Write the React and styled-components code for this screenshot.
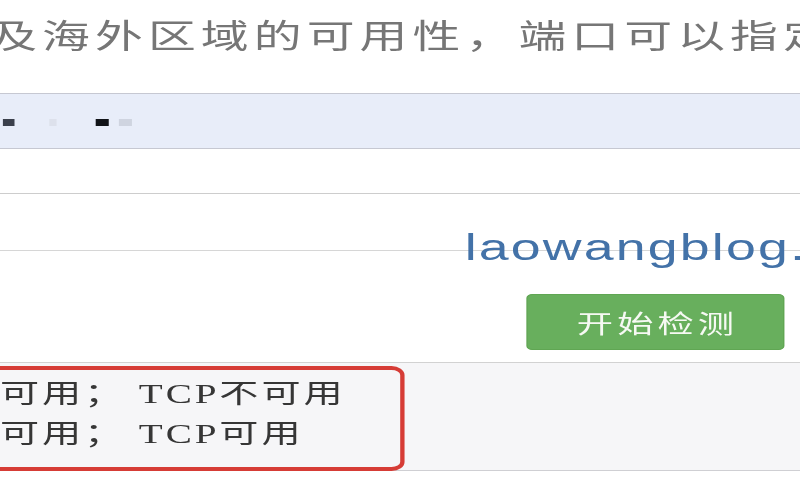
import React from 'react';
import styled, { createGlobalStyle } from 'styled-components';

// the screenshot is stretched sideways, so the page is laid out narrow and scaled
const STRETCH = 1.45;

const GlobalStyle = createGlobalStyle`
  html, body {
    margin: 0;
    padding: 0;
    background: #ffffff;
    overflow: hidden;
  }
`;

const Viewport = styled.div`
  width: 800px;
  height: 500px;
  overflow: hidden;
  background: #ffffff;
`;

const Stage = styled.div`
  width: ${800 / STRETCH}px;
  transform: scaleX(${STRETCH});
  transform-origin: 0 0;
`;

const Intro = styled.div`
  box-sizing: border-box;
  height: 93px;
  padding-top: 18px;
  white-space: nowrap;
  font-family: "Noto Sans CJK SC", "Liberation Serif", serif;
  font-size: 33px;
  line-height: 33px;
  letter-spacing: 3.5px;
  color: #767676;
  margin-left: -7.5px;
`;

const Field = styled.div`
  box-sizing: border-box;
  height: 56px;
  display: flex;
  align-items: center;
  padding-left: 2px;
  padding-top: 2px;
  background: #e8edf9;
  border-top: 1px solid #c6c8d2;
  border-bottom: 1px solid #c6c8d2;
`;

const Blot = styled.span`
  display: inline-block;
  height: 7px;
  width: ${(p) => p.$w}px;
  margin-left: ${(p) => p.$gap}px;
  background: ${(p) => p.$color};
`;

const BlankRow = styled.div`
  box-sizing: border-box;
  height: ${(p) => p.$h}px;
  border-bottom: 1px solid ${(p) => p.$line};
`;

const Panel = styled.div`
  position: relative;
`;

const Watermark = styled.div`
  position: absolute;
  top: -22px;
  left: 320.5px;
  white-space: nowrap;
  font-family: "Liberation Sans", Arial, sans-serif;
  font-size: 37px;
  line-height: 37px;
  letter-spacing: 1.5px;
  color: #4372a8;
  pointer-events: none;
`;

const ActionRow = styled.div`
  box-sizing: border-box;
  height: 112px;
  display: flex;
  justify-content: flex-end;
  align-items: flex-start;
  padding-top: 43px;
  padding-right: 10.3px;
  border-bottom: 1px solid #d2d2d2;
`;

const StartButton = styled.button`
  width: 178px;
  height: 56px;
  display: flex;
  align-items: center;
  justify-content: center;
  padding: 0 0 0 2px;
  border: 1px solid #60a653;
  border-radius: 4px;
  background: #68af5d;
  color: #f6f9f3;
  font-family: "Noto Sans CJK SC", sans-serif;
  font-size: 25px;
  line-height: 25px;
  letter-spacing: 2.8px;
  cursor: pointer;
`;

const Results = styled.div`
  box-sizing: border-box;
  height: 108px;
  padding-top: 3px;
  background: #f6f6f8;
  border-bottom: 1px solid #cfcfd3;
`;

const RedFrame = styled.div`
  box-sizing: border-box;
  width: 299px;
  height: 105px;
  margin-left: -20px;
  padding-top: 5px;
  border: 4px solid #d63c36;
  border-left-width: 3px;
  border-right-width: 3px;
  border-radius: 9px;
`;

const ResultLine = styled.div`
  white-space: nowrap;
  margin-left: ${2 + 20 - 3 - 62}px;
  font-family: "Liberation Serif", "Noto Sans CJK SC", serif;
  font-size: 27px;
  line-height: 39.5px;
  letter-spacing: 2px;
  color: #363636;
`;

const blots = [
  { w: 8, gap: 0, color: '#3b404c' },
  { w: 5, gap: 24, color: '#dde1ec' },
  { w: 9, gap: 27, color: '#111318' },
  { w: 9, gap: 7, color: '#cfd4e0' },
];

const results = ['UDP可用； TCP不可用', 'UDP可用； TCP可用'];

const App = () => {
  return (
    <Viewport>
      <GlobalStyle />
      <Stage>
        <Intro>及海外区域的可用性，端口可以指定</Intro>
        <Field>
          {blots.map((b, i) => (
            <Blot key={i} $w={b.w} $gap={b.gap} $color={b.color} />
          ))}
        </Field>
        <BlankRow $h={45} $line="#cdcdcd" />
        <BlankRow $h={57} $line="#d6d6d6" />
        <Panel>
          <Watermark>laowangblog.com</Watermark>
          <ActionRow>
            <StartButton type="button">开始检测</StartButton>
          </ActionRow>
        </Panel>
        <Results>
          <RedFrame>
            {results.map((line) => (
              <ResultLine key={line}>{line}</ResultLine>
            ))}
          </RedFrame>
        </Results>
      </Stage>
    </Viewport>
  );
};

export default App;
